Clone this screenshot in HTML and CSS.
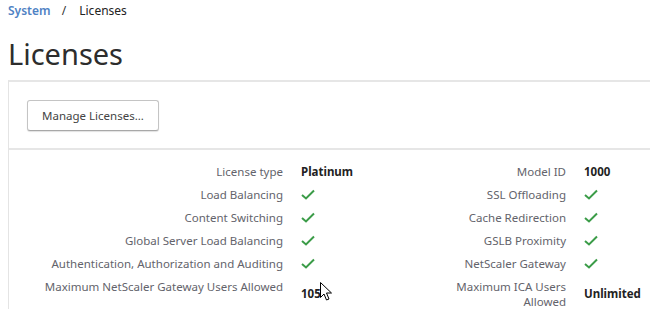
FILE: index.html
```html
<!DOCTYPE html>
<html lang="en">
<head>
    <meta charset="UTF-8">
    <title>Licenses</title>
    <link rel="stylesheet" href="styles.css">
</head>
<body>
    <div class="breadcrumb">
        <a href="#" class="crumb-link">System</a>
        <span class="crumb-sep">/</span>
        <span class="crumb-current">Licenses</span>
    </div>

    <h1 class="page-title">Licenses</h1>

    <div class="panel">
        <div class="panel-actions">
            <button class="btn">Manage Licenses...</button>
        </div>

        <div class="license-grid">
            <div class="label">License type</div>
            <div class="value">Platinum</div>
            <div class="label">Model ID</div>
            <div class="value">1000</div>

            <div class="label">Load Balancing</div>
            <div class="value"><svg class="check" viewBox="0 0 14 11"><path d="M1 6 L5 9.5 L13 1.5"/></svg></div>
            <div class="label">SSL Offloading</div>
            <div class="value"><svg class="check" viewBox="0 0 14 11"><path d="M1 6 L5 9.5 L13 1.5"/></svg></div>

            <div class="label">Content Switching</div>
            <div class="value"><svg class="check" viewBox="0 0 14 11"><path d="M1 6 L5 9.5 L13 1.5"/></svg></div>
            <div class="label">Cache Redirection</div>
            <div class="value"><svg class="check" viewBox="0 0 14 11"><path d="M1 6 L5 9.5 L13 1.5"/></svg></div>

            <div class="label">Global Server Load Balancing</div>
            <div class="value"><svg class="check" viewBox="0 0 14 11"><path d="M1 6 L5 9.5 L13 1.5"/></svg></div>
            <div class="label">GSLB Proximity</div>
            <div class="value"><svg class="check" viewBox="0 0 14 11"><path d="M1 6 L5 9.5 L13 1.5"/></svg></div>

            <div class="label">Authentication, Authorization and Auditing</div>
            <div class="value"><svg class="check" viewBox="0 0 14 11"><path d="M1 6 L5 9.5 L13 1.5"/></svg></div>
            <div class="label">NetScaler Gateway</div>
            <div class="value"><svg class="check" viewBox="0 0 14 11"><path d="M1 6 L5 9.5 L13 1.5"/></svg></div>

            <div class="label">Maximum NetScaler Gateway Users Allowed</div>
            <div class="value value-mid">105
                <svg class="cursor" viewBox="0 0 12 19"><path d="M0.5 0.5 L0.5 15.5 L4 12 L6.5 18 L9 17 L6.5 11 L11.5 11 Z"/></svg>
            </div>
            <div class="label">Maximum ICA Users Allowed</div>
            <div class="value value-mid">Unlimited</div>
        </div>
    </div>
</body>
</html>
```

FILE: styles.css
```css
html, body {
    overflow: hidden;
}
body {
    margin: 0;
    padding: 3px 0 0 8px;
    font-family: 'Noto Sans', 'Open Sans', sans-serif;
    font-size: 11.5px;
    color: #333;
    background: white;
}
.breadcrumb {
    font-size: 12px;
    line-height: 16px;
}
.crumb-link {
    color: #4f82c4;
    font-weight: 600;
    text-decoration: none;
}
.crumb-sep {
    color: #333;
    margin: 0 10px 0 8px;
}
.crumb-current {
    color: #222;
}
.page-title {
    margin: 15px 0 0 0;
    font-size: 29px;
    font-weight: 400;
    line-height: 40px;
    color: #2d2d2d;
}
.panel {
    margin-top: 6px;
    width: 642px;
    border-left: 1px solid #e4e4e4;
    border-top: 2px solid #e6e6e6;
}
.panel-actions {
    padding: 18px 18px 17px 18px;
    border-bottom: 2px solid #e6e6e6;
}
.btn {
    width: 132px;
    height: 31px;
    font-family: inherit;
    font-size: 11.5px;
    color: #444;
    background: white;
    border: 1px solid #c4c4c4;
    border-bottom-color: #a8a8a8;
    border-radius: 3px;
    box-shadow: 0 1px 1px rgba(0,0,0,0.12);
    padding: 0;
}
.license-grid {
    display: grid;
    grid-template-columns: 274px 127px 120px 1fr;
    column-gap: 18px;
    grid-auto-rows: minmax(23px, auto);
    padding-top: 10px;
}
.label {
    text-align: right;
    color: #63636b;
    line-height: 15px;
    padding-top: 4px;
}
.value {
    color: #222;
    font-weight: 700;
    display: flex;
    align-items: center;
    position: relative;
}
.value-mid {
    padding-top: 3px;
}
.check {
    width: 14px;
    height: 11px;
    fill: none;
    stroke: #3b9c48;
    stroke-width: 2;
}
.cursor {
    position: absolute;
    left: 19px;
    top: 7px;
    width: 12px;
    height: 19px;
    fill: white;
    stroke: black;
    stroke-width: 1;
}
```
